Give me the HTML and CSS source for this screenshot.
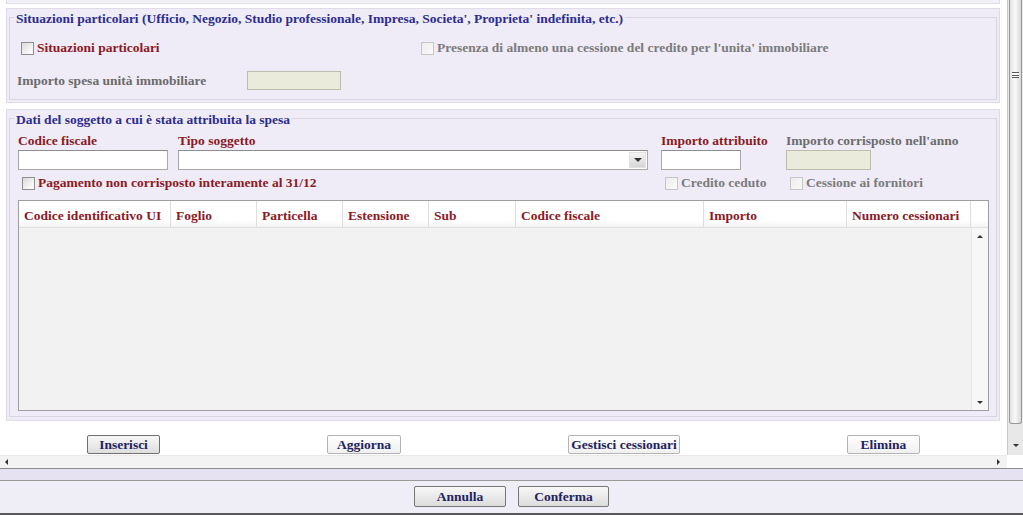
FILE: index.html
```html
<!DOCTYPE html>
<html lang="it">
<head>
<meta charset="utf-8">
<title>Dati spesa</title>
<link rel="stylesheet" href="styles.css">
</head>
<body>
<div class="app">
  <div class="viewport">
    <div class="scrollarea">
      <div class="content">
        <div class="prev"></div>

        <div class="panel">
          <fieldset class="fs fs1">
            <legend><span class="legend-text">Situazioni particolari (Ufficio, Negozio, Studio professionale, Impresa, Societa', Proprieta' indefinita, etc.)</span></legend>
            <div class="s1-row1">
              <label class="chk chk-main"><input type="checkbox" class="cb"><span class="lbl-red">Situazioni particolari</span></label>
              <label class="chk"><input type="checkbox" class="cb" disabled><span class="lbl-dis">Presenza di almeno una cessione del credito per l'unita' immobiliare</span></label>
            </div>
            <div class="s1-row2">
              <span class="lbl-gray s1-lbl">Importo spesa unità immobiliare</span>
              <input type="text" class="inp inp-dis w94" disabled>
            </div>
          </fieldset>
        </div>

        <div class="panel panel2">
          <fieldset class="fs fs2">
            <legend><span class="legend-text">Dati del soggetto a cui è stata attribuita la spesa</span></legend>
            <div class="grid labels">
              <span class="lbl-red">Codice fiscale</span>
              <span class="lbl-red">Tipo soggetto</span>
              <span class="lbl-red">Importo attribuito</span>
              <span class="lbl-gray">Importo corrisposto nell'anno</span>
            </div>
            <div class="grid fields">
              <input type="text" class="inp w150">
              <div class="select"><span class="sel-btn"><span class="tri-down"></span></span></div>
              <input type="text" class="inp w80">
              <input type="text" class="inp inp-dis w84" disabled>
            </div>
            <div class="grid checks">
              <label class="chk span2"><input type="checkbox" class="cb"><span class="lbl-red">Pagamento non corrisposto interamente al 31/12</span></label>
              <label class="chk"><input type="checkbox" class="cb" disabled><span class="lbl-dis">Credito ceduto</span></label>
              <label class="chk"><input type="checkbox" class="cb" disabled><span class="lbl-dis">Cessione ai fornitori</span></label>
            </div>
            <div class="table">
              <div class="thead">
                <div class="th c1">Codice identificativo UI</div>
                <div class="th c2">Foglio</div>
                <div class="th c3">Particella</div>
                <div class="th c4">Estensione</div>
                <div class="th c5">Sub</div>
                <div class="th c6">Codice fiscale</div>
                <div class="th c7">Importo</div>
                <div class="th c8">Numero cessionari</div>
                <div class="th c9"></div>
              </div>
              <div class="tbody">
                <div class="tscroll">
                  <span class="tri-up small"></span>
                  <span class="tri-down small"></span>
                </div>
              </div>
            </div>
          </fieldset>
        </div>

        <div class="actions">
          <button class="btn btn-focus w73">Inserisci</button>
          <button class="btn w74">Aggiorna</button>
          <button class="btn w112">Gestisci cessionari</button>
          <button class="btn w73">Elimina</button>
        </div>
      </div>
      <div class="hscroll">
        <span class="tri-left"></span>
        <span class="tri-right"></span>
      </div>
    </div>
    <div class="vscroll">
      <div class="vtrack">
        <div class="thumb"><span class="grip"></span></div>
        <span class="tri-down vdown"></span>
      </div>
      <div class="corner"></div>
    </div>
  </div>
  <div class="footer">
    <div class="band"></div>
    <div class="footer-main">
      <button class="btn btn-big w92">Annulla</button>
      <button class="btn btn-big w91">Conferma</button>
    </div>
  </div>
</div>
</body>
</html>
```
FILE: styles.css
```css
* { box-sizing: border-box; }
html, body { margin: 0; padding: 0; }
body {
  width: 1023px;
  height: 515px;
  overflow: hidden;
  background: #fff;
  font-family: "Liberation Serif", "Times New Roman", serif;
  font-size: 13.5px;
  font-weight: bold;
}
.app { display: flex; flex-direction: column; height: 515px; }
.viewport { display: flex; height: 468px; }
.scrollarea { width: 1007px; display: flex; flex-direction: column; }
.content { height: 455px; overflow: hidden; }

.prev {
  margin: 0 7px 0 6px;
  height: 4px;
  background: #f3f1f8;
  border: 1px solid #dfdce7;
  border-top: none;
}
.panel {
  margin: 4px 7px 0 6px;
  border: 1px solid #dfdce7;
  background: #efecf7;
}
.panel2 { margin-top: 6px; }
.fs {
  margin: 0 2px 2px 2px;
  border: 1px solid #d9d5e3;
  padding: 0 0 9px 4px;
  min-width: 0;
}
.fs2 { padding-bottom: 5px; margin-bottom: 3px; }
legend {
  padding: 0 2px;
  color: #2c2c8e;
  line-height: 16px;
  height: 16px;
}
.legend-text { display: block; line-height: 20px; }
.lbl-red { color: #8b1a1f; }
.lbl-gray { color: #6b6b6b; }
.lbl-dis { color: #7b7b7b; }

.chk { display: flex; align-items: center; height: 16px; white-space: nowrap; }
.cb {
  appearance: none;
  -webkit-appearance: none;
  width: 13px;
  height: 13px;
  margin: 0 3px 0 0;
  border: 1px solid #8f8f8f;
  background: linear-gradient(135deg, #d9d9d9, #f7f7f7 70%, #ffffff);
  flex: none;
}
.cb:disabled {
  border-color: #c6c6c6;
  background: linear-gradient(135deg, #ededed, #fafafa);
}

.s1-row1 { display: flex; margin-top: 15px; padding-left: 7px; }
.chk-main { width: 400px; }
.s1-row2 { display: flex; align-items: center; margin-top: 15px; padding-left: 3px; }
.s1-lbl { width: 230px; }

.inp {
  height: 20px;
  border: 1px solid #a9a9a9;
  border-top-color: #8d8d8d;
  background: #fff;
  margin: 0;
  padding: 0;
  font: inherit;
}
.inp-dis { background: #ebebdc; border-color: #bdbdae; }
.w94 { width: 94px; height: 19px; }
.w150 { width: 150px; }
.w80 { width: 80px; }
.w84 { width: 85px; }

.grid { display: grid; grid-template-columns: 160px 483px 125px 1fr; padding-left: 4px; }
.labels { margin-top: 7px; line-height: 16px; white-space: nowrap; }
.fields { margin-top: 1px; height: 20px; }
.checks { margin-top: 5px; }
.checks .chk { padding-left: 4px; }
.span2 { grid-column: span 2; }

.select {
  width: 470px;
  height: 20px;
  border: 1px solid #a9a9a9;
  border-top-color: #8d8d8d;
  background: #fff;
  display: flex;
  justify-content: flex-end;
  align-items: center;
  padding-right: 1px;
}
.sel-btn {
  width: 17px;
  height: 16px;
  background: linear-gradient(#f4f4f4, #d6d6d6);
  border: 1px solid #e2e2e2;
  display: flex;
  align-items: center;
  justify-content: center;
}
.tri-down {
  width: 0; height: 0;
  border-left: 4px solid transparent;
  border-right: 4px solid transparent;
  border-top: 4px solid #333;
}
.tri-up {
  width: 0; height: 0;
  border-left: 4px solid transparent;
  border-right: 4px solid transparent;
  border-bottom: 4px solid #333;
}
.small { border-left-width: 3px; border-right-width: 3px; }
.tri-up.small { border-bottom-width: 3px; }
.tri-down.small { border-top-width: 3px; }
.tri-left {
  width: 0; height: 0;
  border-top: 3px solid transparent;
  border-bottom: 3px solid transparent;
  border-right: 3px solid #333;
}
.tri-right {
  width: 0; height: 0;
  border-top: 3px solid transparent;
  border-bottom: 3px solid transparent;
  border-left: 3px solid #333;
}

.table {
  margin: 9px 0 0 4px;
  width: 971px;
  height: 211px;
  border: 1px solid #9e9e9e;
  background: #f2f2f2;
  display: flex;
  flex-direction: column;
}
.thead {
  display: flex;
  height: 27px;
  flex: none;
  background: linear-gradient(#ffffff 75%, #f3f3f3);
  border-bottom: 1px solid #e0e0e0;
}
.th {
  border-right: 1px solid #dedede;
  padding-left: 5px;
  line-height: 29px;
  color: #8b1a1f;
  white-space: nowrap;
}
.c1 { width: 152px; }
.c2, .c3, .c4 { width: 86px; }
.c5 { width: 87px; }
.c6 { width: 188px; }
.c7 { width: 143px; }
.c8 { width: 124px; }
.c9 { width: 17px; border-right: none; }
.tbody { flex: 1; display: flex; justify-content: flex-end; }
.tscroll {
  width: 17px;
  background: #f7f7f7;
  border-left: 1px solid #e6e6e6;
  display: flex;
  flex-direction: column;
  justify-content: space-between;
  align-items: center;
  padding: 7px 0 6px;
}

.actions { display: flex; gap: 167px; padding-left: 87px; margin-top: 14px; }
.btn {
  height: 19px;
  padding: 0;
  margin: 0;
  font-family: "Liberation Serif", "Times New Roman", serif;
  font-size: 13.5px;
  font-weight: bold;
  color: #23235f;
  border: 1px solid #b4b4b4;
  border-radius: 2px;
  background: linear-gradient(#ffffff, #f0f0f0);
}
.btn-focus {
  border-color: #6f6f6f;
  background: linear-gradient(#f7f7f7, #dedede);
}
.w73 { width: 73px; }
.w74 { width: 74px; }
.w112 { width: 112px; }

.hscroll {
  height: 13px;
  background: #f3f3f3;
  border-top: 1px solid #e9e9e9;
  display: flex;
  align-items: center;
  justify-content: space-between;
  padding: 0 7px 0 5px;
}
.vscroll { width: 16px; display: flex; flex-direction: column; }
.vtrack {
  height: 455px;
  background: #e8e8e8;
  border-left: 1px solid #c9c9c9;
  display: flex;
  flex-direction: column;
  align-items: center;
}
.thumb {
  width: 13px;
  height: 424px;
  border: 1px solid #979797;
  border-top: none;
  border-radius: 0 0 3px 3px;
  background: linear-gradient(90deg, #e2e2e2, #f9f9f9 45%, #d9d9d9);
  padding-top: 72px;
  display: flex;
  justify-content: center;
}
.grip {
  width: 7px;
  height: 6px;
  border-top: 1px solid #555;
  border-bottom: 1px solid #555;
  background: linear-gradient(#fff 0 2px, #555 2px 3px, #fff 3px);
}
.vdown { margin-top: 20px; border-left-width: 3px; border-right-width: 3px; border-top-width: 3px; }
.corner { height: 13px; background: #fff; }

.footer { height: 47px; border-top: 1px solid #8c8c8c; flex: none; }
.band { height: 12px; background: #e6e2f1; border-bottom: 1px solid #9a9a9a; }
.footer-main {
  height: 34px;
  background: #efedf6;
  border-bottom: 2px solid #5a5a5a;
  display: flex;
  justify-content: center;
  gap: 12px;
  padding-top: 5px;
}
.btn-big {
  height: 21px;
  border-color: #767676;
  background: linear-gradient(#f8f8f8, #dcdcdc);
}
.w92 { width: 92px; }
.w91 { width: 91px; }
```
